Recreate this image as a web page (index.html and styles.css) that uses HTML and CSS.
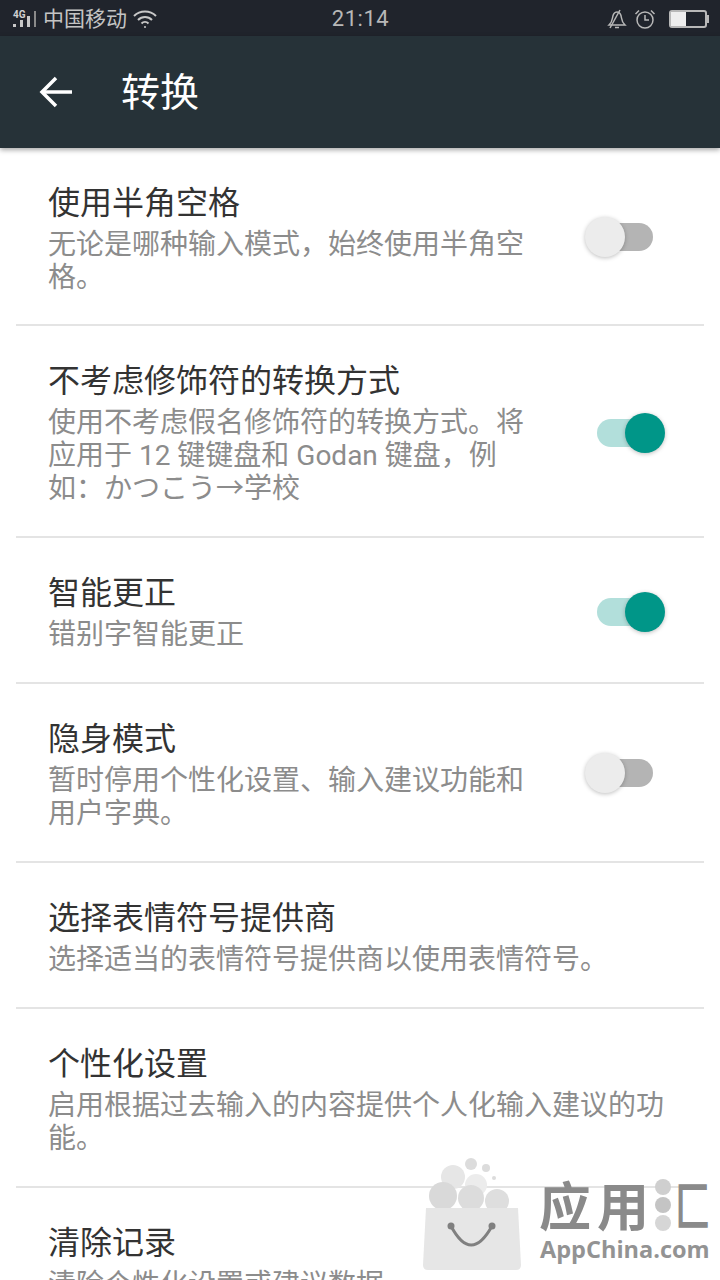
FILE: index.html
```html
<!DOCTYPE html>
<html lang="zh-CN">

<head>
    <meta charset="UTF-8">
    <meta name="viewport" content="width=device-width, initial-scale=1.0">
    <title>转换</title>
    <link rel="stylesheet" href="styles.css">
</head>

<body>
    <!-- Barra de estado -->
    <div class="status-bar">
        <div class="status-left">
            <svg class="signal" width="26" height="20" viewBox="0 0 26 20">
                <text x="1" y="9" class="signal-text">4G</text>
                <rect x="1" y="15" width="3" height="3" fill="#c8c8c8" />
                <rect x="8" y="11" width="3" height="7" fill="#c8c8c8" />
                <rect x="15" y="7" width="3" height="11" fill="#c8c8c8" />
                <rect x="22" y="2" width="2" height="16" fill="#8a8a8a" />
            </svg>
            <span class="carrier">中国移动</span>
            <svg width="24" height="20" viewBox="0 0 24 20" fill="none" stroke="#c8c8c8" stroke-width="2">
                <path d="M1 7c6-6 16-6 22 0" />
                <path d="M5 11c4-4 10-4 14 0" />
                <path d="M8.500 14.500c2-2 5-2 7 0" />
                <circle cx="12" cy="18" r="1" fill="#c8c8c8" stroke="none" />
            </svg>
        </div>
        <span class="clock">21:14</span>
        <div class="status-right">
            <svg width="20" height="20" viewBox="0 0 20 20" fill="none" stroke="#b8b8b8" stroke-width="1.500">
                <path d="M2 16c2-2 3-3 3.500-7 .5-4 2-6 4.500-6s4 2 4.500 6c.5 4 1.500 5 3.500 7z" />
                <path d="M13 1 3 19" />
                <path d="M8 18.500h4" />
            </svg>
            <svg width="22" height="20" viewBox="0 0 22 20" fill="none" stroke="#b8b8b8" stroke-width="1.500">
                <circle cx="11" cy="11" r="8" />
                <path d="M11 6v5h4" />
                <path d="M1.500 5 5 1.500M20.500 5 17 1.500" />
            </svg>
            <div class="battery">
                <div class="battery-level"></div>
            </div>
        </div>
    </div>

    <!-- Cabecera -->
    <header class="toolbar">
        <svg class="back" width="34" height="32" viewBox="0 0 34 32" fill="none" stroke="#fff" stroke-width="3.500">
            <path d="M33 16H3" />
            <path d="M17 2 3 16l14 14" />
        </svg>
        <h1>转换</h1>
    </header>

    <div class="settings">
        <div class="row">
            <div class="row-text">
                <div class="row-title">使用半角空格</div>
                <div class="row-sub">无论是哪种输入模式，始终使用半角空<br>格。</div>
            </div>
            <div class="switch"><span class="track"></span><span class="thumb"></span></div>
        </div>

        <div class="row">
            <div class="row-text">
                <div class="row-title">不考虑修饰符的转换方式</div>
                <div class="row-sub">使用不考虑假名修饰符的转换方式。将<br>应用于 12 键键盘和 Godan 键盘，例<br>如：かつこう→学校</div>
            </div>
            <div class="switch on"><span class="track"></span><span class="thumb"></span></div>
        </div>

        <div class="row">
            <div class="row-text">
                <div class="row-title">智能更正</div>
                <div class="row-sub">错别字智能更正</div>
            </div>
            <div class="switch on"><span class="track"></span><span class="thumb"></span></div>
        </div>

        <div class="row">
            <div class="row-text">
                <div class="row-title">隐身模式</div>
                <div class="row-sub">暂时停用个性化设置、输入建议功能和<br>用户字典。</div>
            </div>
            <div class="switch"><span class="track"></span><span class="thumb"></span></div>
        </div>

        <div class="row">
            <div class="row-text">
                <div class="row-title">选择表情符号提供商</div>
                <div class="row-sub">选择适当的表情符号提供商以使用表情符号。</div>
            </div>
        </div>

        <div class="row">
            <div class="row-text">
                <div class="row-title">个性化设置</div>
                <div class="row-sub">启用根据过去输入的内容提供个人化输入建议的功<br>能。</div>
            </div>
        </div>

        <div class="row">
            <div class="row-text">
                <div class="row-title">清除记录</div>
                <div class="row-sub">清除个性化设置或建议数据</div>
            </div>
        </div>
    </div>

    <!-- Marca de agua -->
    <svg class="watermark" width="320" height="140" viewBox="0 0 320 140">
        <circle cx="53" cy="37" r="12" fill="#e6e6e6" />
        <circle cx="76" cy="45" r="11" fill="#ececec" />
        <circle cx="71" cy="24" r="6" fill="#dcdcdc" />
        <circle cx="86" cy="28" r="4" fill="#dcdcdc" />
        <circle cx="94" cy="38" r="2" fill="#dcdcdc" />
        <circle cx="43" cy="56" r="14" fill="#d9d9d9" />
        <circle cx="71" cy="58" r="13" fill="#dcdcdc" />
        <circle cx="97" cy="61" r="12" fill="#dedede" />
        <path d="M26 68h92l3 57q0 5-5 5H28q-5 0-5-5z" fill="#e6e6e6" />
        <path d="M51 86q20 38 41 0" fill="none" stroke="#808080" stroke-width="3" />
        <circle cx="51" cy="86" r="3.500" fill="#808080" />
        <circle cx="92" cy="86" r="3.500" fill="#808080" />
        <text x="139" y="86" class="wm-name">应用</text>
        <circle cx="263" cy="47" r="8" fill="#cfcfcf" />
        <circle cx="263" cy="65" r="8" fill="#c4c4c4" />
        <circle cx="263" cy="83" r="8" fill="#d6d6d6" />
        <text transform="translate(275 86) scale(.68 1)" class="wm-name">匚</text>
        <text x="140" y="118" class="wm-url">AppChina.com</text>
    </svg>
</body>

</html>
```

FILE: styles.css
```css
* {
    box-sizing: border-box;
}

body {
    position: relative;
    width: 720px;
    height: 1280px;
    margin: 0;
    overflow: hidden;
    background-color: #fff;
    font-family: Roboto, 'Noto Sans CJK SC', sans-serif;
}

.status-bar {
    display: grid;
    grid-template-columns: 1fr auto 1fr;
    align-items: center;
    height: 36px;
    padding: 2px 11px 0 12px;
    background-color: #20242c;
    color: #c4c4c4;
}

.status-left {
    display: flex;
    align-items: center;
    gap: 5px;
}

.signal-text {
    font-size: 10px;
    font-weight: bold;
    fill: #d0d0d0;
}

.carrier {
    font-size: 21px;
    line-height: 34px;
    margin-right: 1px;
}

.clock {
    font-size: 22px;
    line-height: 34px;
    letter-spacing: 0.5px;
    color: #b8b8b8;
}

.status-right {
    display: flex;
    align-items: center;
    justify-content: flex-end;
    gap: 7px;
}

.battery {
    position: relative;
    width: 38px;
    height: 18px;
    margin: 0 2px 0 6px;
    border: 2px solid #b8b8b8;
    border-radius: 3px;
}

.battery::after {
    content: "";
    position: absolute;
    top: 3px;
    right: -4px;
    width: 2px;
    height: 8px;
    background-color: #b8b8b8;
}

.battery-level {
    width: 15px;
    height: 100%;
    background-color: #eee;
}

.toolbar {
    position: relative;
    z-index: 2;
    display: flex;
    align-items: center;
    height: 112px;
    padding-left: 39px;
    background-color: #263238;
    box-shadow: 0 2px 5px rgba(0, 0, 0, 0.35);
}

.toolbar h1 {
    margin: 2px 0 0 48px;
    font-size: 39px;
    font-weight: 400;
    line-height: 50px;
    color: #fff;
}

.settings {
    padding: 0 16px;
}

.row {
    display: flex;
    align-items: center;
    justify-content: space-between;
    padding: 35px 39px 31px 32px;
    border-bottom: 2px solid #e4e4e4;
}

/* La primera fila queda un poco mas corta bajo la cabecera */
.row:first-child {
    padding-bottom: 30px;
}

.row:last-child {
    border-bottom: none;
}

.row-title {
    font-size: 32px;
    line-height: 40px;
    color: #333;
}

.row-sub {
    margin-top: 5px;
    font-size: 28px;
    line-height: 33px;
    color: #8c8c8c;
}

.switch {
    position: relative;
    flex: none;
    width: 80px;
    height: 40px;
    margin-bottom: 3px;
}

.switch.on {
    margin-bottom: 1px;
}

.track {
    position: absolute;
    top: 6px;
    left: 15px;
    width: 53px;
    height: 28px;
    border-radius: 14px;
    background-color: #b4b4b4;
}

.thumb {
    position: absolute;
    top: 0;
    left: 0;
    width: 40px;
    height: 40px;
    border-radius: 50%;
    background-color: #ececec;
    box-shadow: 0 1px 4px rgba(0, 0, 0, 0.25);
}

.switch.on .track {
    left: 12px;
    background-color: #b2dfdb;
}

.switch.on .thumb {
    left: 40px;
    background-color: #009688;
}

.watermark {
    position: absolute;
    right: 0;
    bottom: 0;
}

.wm-name {
    font-size: 52px;
    font-weight: bold;
    letter-spacing: 6px;
    fill: #8a8a8a;
}

.wm-url {
    font-family: 'Open Sans', sans-serif;
    font-size: 23.500px;
    font-weight: bold;
    fill: #939393;
}
```
